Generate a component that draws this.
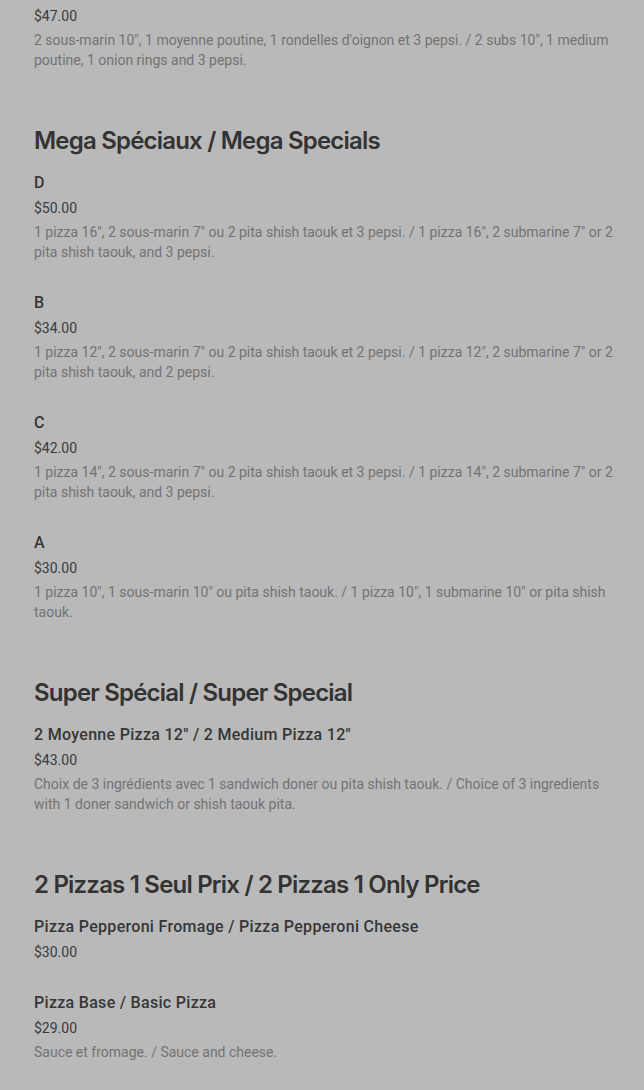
import React from 'react'

interface Item {
  name?: string
  price: string
  desc?: string
}

interface Section {
  title?: string
  items: Item[]
}

const sections: Section[] = [
  {
    items: [
      {
        price: '$47.00',
        desc: '2 sous-marin 10", 1 moyenne poutine, 1 rondelles d\'oignon et 3 pepsi. / 2 subs 10", 1 medium poutine, 1 onion rings and 3 pepsi.',
      },
    ],
  },
  {
    title: 'Mega Spéciaux / Mega Specials',
    items: [
      {
        name: 'D',
        price: '$50.00',
        desc: '1 pizza 16", 2 sous-marin 7" ou 2 pita shish taouk et 3 pepsi. / 1 pizza 16", 2 submarine 7" or 2 pita shish taouk, and 3 pepsi.',
      },
      {
        name: 'B',
        price: '$34.00',
        desc: '1 pizza 12", 2 sous-marin 7" ou 2 pita shish taouk et 2 pepsi. / 1 pizza 12", 2 submarine 7" or 2 pita shish taouk, and 2 pepsi.',
      },
      {
        name: 'C',
        price: '$42.00',
        desc: '1 pizza 14", 2 sous-marin 7" ou 2 pita shish taouk et 3 pepsi. / 1 pizza 14", 2 submarine 7" or 2 pita shish taouk, and 3 pepsi.',
      },
      {
        name: 'A',
        price: '$30.00',
        desc: '1 pizza 10", 1 sous-marin 10" ou pita shish taouk. / 1 pizza 10", 1 submarine 10" or pita shish taouk.',
      },
    ],
  },
  {
    title: 'Super Spécial / Super Special',
    items: [
      {
        name: '2 Moyenne Pizza 12" / 2 Medium Pizza 12"',
        price: '$43.00',
        desc: 'Choix de 3 ingrédients avec 1 sandwich doner ou pita shish taouk. / Choice of 3 ingredients with 1 doner sandwich or shish taouk pita.',
      },
    ],
  },
  {
    title: '2 Pizzas 1 Seul Prix / 2 Pizzas 1 Only Price',
    items: [
      { name: 'Pizza Pepperoni Fromage / Pizza Pepperoni Cheese', price: '$30.00' },
      { name: 'Pizza Base / Basic Pizza', price: '$29.00', desc: 'Sauce et fromage. / Sauce and cheese.' },
    ],
  },
]

function MenuItem({ item }: { item: Item }) {
  return (
    <div className="pb-[28px]">
      {item.name && (
        <div className="text-[16px] leading-[24px] font-medium tracking-[0.3px] text-[#363636] mb-[3px] pt-[1px]">
          {item.name}
        </div>
      )}
      <div className="text-[14px] leading-[20px] text-[#3a3a3a]">{item.price}</div>
      {item.desc && (
        <p className="mt-[4px] text-[14px] leading-[20px] text-[#737373]">{item.desc}</p>
      )}
    </div>
  )
}

export default function App() {
  return (
    <div
      className="min-h-[1090px] bg-[#b9b9b9] pl-[34px] pr-[30px] pt-[6px]"
      style={{ fontFamily: 'Roboto, "Noto Sans", sans-serif' }}
    >
      {sections.map((s, i) => (
        <div key={i} className={s.title ? 'pt-[27px]' : ''}>
          {s.title && (
            <h2
              className="text-[24px] leading-[32px] font-semibold tracking-[-0.8px] text-[#333333] mb-[13px]"
              style={{ fontFamily: 'Inter, "Noto Sans", sans-serif' }}
            >
              {s.title}
            </h2>
          )}
          {s.items.map((it, j) => (
            <MenuItem key={j} item={it} />
          ))}
        </div>
      ))}
    </div>
  )
}
